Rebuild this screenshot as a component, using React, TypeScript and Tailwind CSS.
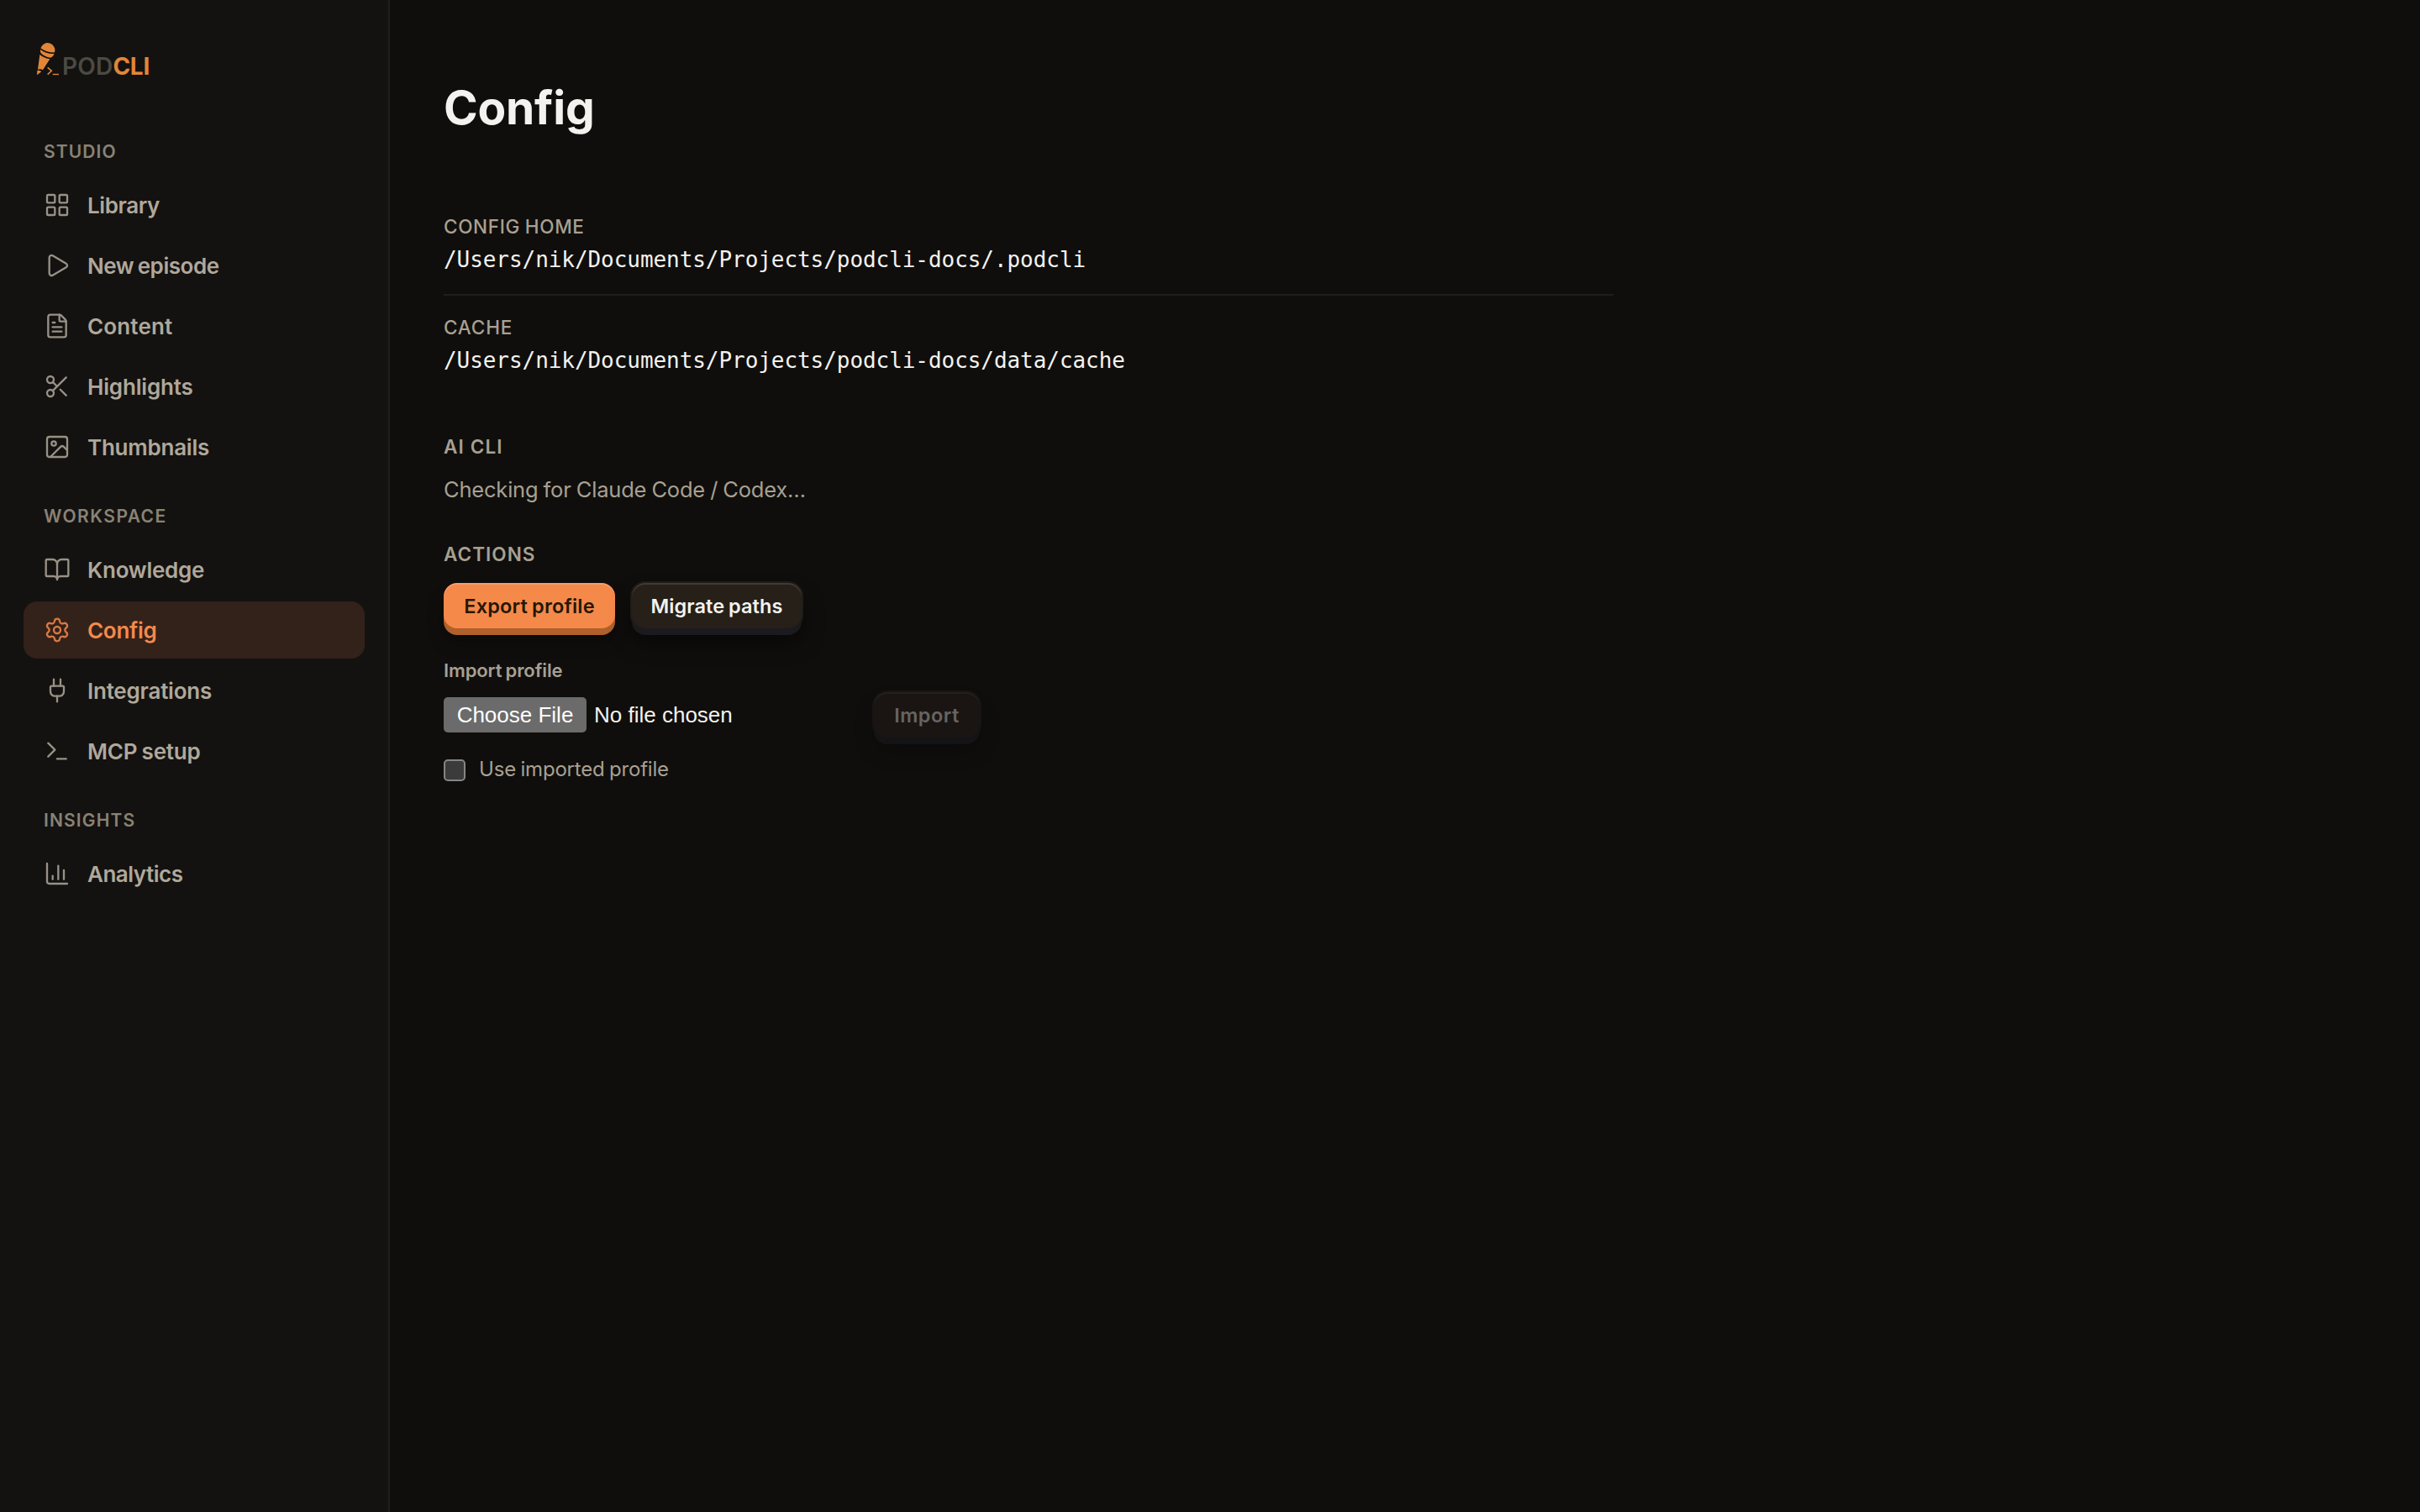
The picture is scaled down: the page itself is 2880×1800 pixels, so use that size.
import React from "react";
import {
  BookOpen,
  ChartColumn,
  FileText,
  Image as ImageIcon,
  LayoutGrid,
  Play,
  Plug,
  Scissors,
  Settings,
  Terminal,
  type LucideIcon,
} from "lucide-react";

type NavItem = { label: string; icon: LucideIcon; text: string; active?: boolean };
type NavGroup = { title: string; tracking: string; items: NavItem[] };

const groups: NavGroup[] = [
  {
    title: "STUDIO",
    tracking: "tracking-[1.1px]",
    items: [
      { label: "Library", icon: LayoutGrid, text: "tracking-[-0.4px]" },
      { label: "New episode", icon: Play, text: "tracking-[-0.45px] [word-spacing:-1.6px]" },
      { label: "Content", icon: FileText, text: "tracking-[0.15px]" },
      { label: "Highlights", icon: Scissors, text: "tracking-[-0.18px]" },
      { label: "Thumbnails", icon: ImageIcon, text: "tracking-[-0.23px]" },
    ],
  },
  {
    title: "WORKSPACE",
    tracking: "tracking-[1.45px]",
    items: [
      { label: "Knowledge", icon: BookOpen, text: "tracking-[-0.26px]" },
      { label: "Config", icon: Settings, text: "tracking-[-0.29px]", active: true },
      { label: "Integrations", icon: Plug, text: "tracking-[-0.22px]" },
      { label: "MCP setup", icon: Terminal, text: "tracking-[-0.2px] [word-spacing:-1.1px]" },
    ],
  },
  {
    title: "INSIGHTS",
    tracking: "tracking-[1.15px]",
    items: [{ label: "Analytics", icon: ChartColumn, text: "tracking-[-0.5px]" }],
  },
];

const paths = [
  {
    label: "CONFIG HOME",
    value: "/Users/nik/Documents/Projects/podcli-docs/.podcli",
    text: "tracking-[0.65px] [word-spacing:-0.7px]",
    row: "border-b-2 border-[#1f1e1c]",
  },
  {
    label: "CACHE",
    value: "/Users/nik/Documents/Projects/podcli-docs/data/cache",
    text: "tracking-[0.83px]",
    row: "",
  },
];

function Logo() {
  return (
    <div className="flex h-10 items-start">
      <svg viewBox="66 60 90 120" className="h-10 w-[30px] shrink-0" fill="#e28639">
        <path d="M85 82 A25.500 25.500 0 0 1 135 97 Q106 99 85 82 Z" />
        <path d="M84 87 Q106 104 134 102 Q130 112 121 116 Q96 112 85 98 Q83 92 84 87 Z" />
        <path d="M82 105 Q95 117 118 121 L93 160 Q85 155 75 158 Z" />
        <path d="M73 162 Q82 160 88 166 L72 178 Z" />
        <path d="M110 151 L124 163 L110 176" fill="none" stroke="#e28639" strokeWidth="4.500" />
        <rect x="128" y="173.500" width="22" height="4" />
      </svg>
      <div className="ml-[2px] mt-[12px] flex text-[28px] leading-[34px]">
        <span className="font-semibold tracking-[0.2px] text-[#4b4a43]">POD</span>
        <span className="font-bold tracking-[-0.27px] text-[#e28639]">CLI</span>
      </div>
    </div>
  );
}

function Sidebar() {
  return (
    <aside className="flex w-[464px] shrink-0 flex-col border-r-2 border-[#1f1e1c] bg-[#131210] pt-[50px]">
      <div className="pl-[42px]">
        <Logo />
      </div>
      <nav className="mt-[42px] flex flex-col">
        {groups.map((g) => (
          <section key={g.title} className="flex flex-col pl-7 pr-7">
            <h2 className={`mt-[34px] mb-[14px] pl-6 text-[21px] leading-[30px] font-semibold text-[#8a8275] ${g.tracking}`}>
              {g.title}
            </h2>
            <ul className="flex flex-col gap-1">
              {g.items.map(({ label, icon: Icon, text, active }) => (
                <li
                  key={label}
                  className={`flex h-[68px] items-center gap-5 rounded-2xl pl-6 ${
                    active ? "bg-[#33221a] text-[#f5894a]" : "text-[#b0a89b]"
                  }`}
                >
                  <Icon size={32} strokeWidth={1.75} className="opacity-85" />
                  <span className={`mt-[2px] text-[26px] leading-[34px] font-semibold whitespace-nowrap ${text}`}>{label}</span>
                </li>
              ))}
            </ul>
          </section>
        ))}
      </nav>
    </aside>
  );
}

const darkButton =
  "h-[54px] rounded-[16px] text-center text-[23.5px] leading-[56px] font-semibold";

export default function App() {
  return (
    <div className="flex h-[1800px] w-[2880px] overflow-hidden bg-[#0f0e0c] font-['Inter',sans-serif]">
      <Sidebar />
      <main className="flex w-[1456px] flex-col pl-16 pt-[98px]">
        <h1 className="text-[55px] leading-[60px] font-bold tracking-[-0.2px] text-[#f4f2ee]">Config</h1>

        <div className="mt-[74px] flex flex-col">
          {paths.map((p) => (
            <div key={p.label} className={`flex h-[120px] flex-col pt-6 ${p.row}`}>
              <div className={`text-[22.5px] leading-[28px] font-medium text-[#a8a092] ${p.text}`}>{p.label}</div>
              <div className="mt-[7px] font-['DejaVu_Sans_Mono',monospace] text-[26px] leading-9 tracking-[-0.06px] text-[#f4f2ee]">
                {p.value}
              </div>
            </div>
          ))}
        </div>

        <h2 className="mt-[46px] text-[22.5px] leading-[28px] font-semibold tracking-[1.16px] text-[#a8a092]">AI CLI</h2>
        <p className="mt-[19px] text-[25.5px] leading-9 tracking-[-0.2px] text-[#a8a092] [word-spacing:-0.8px]">
          Checking for Claude Code / Codex…
        </p>

        <h2 className="mt-[45px] text-[22.5px] leading-[28px] font-semibold tracking-[1.05px] text-[#a8a092]">ACTIONS</h2>
        <div className="mt-5 flex gap-5">
          <button className="h-[54px] w-[204px] rounded-[16px] bg-[#f5894a] text-center text-[23.5px] leading-[56px] font-semibold tracking-[0.2px] text-[#251703] shadow-[inset_0_2px_0_rgba(255,255,255,0.18),0_8px_0_#b0602a,0_16px_20px_rgba(0,0,0,0.3)] [word-spacing:-1.1px]">
            Export profile
          </button>
          <button
            className={`w-[202px] bg-[#262019] tracking-[0.1px] text-[#f4f2ee] shadow-[inset_0_2px_0_rgba(255,255,255,0.12),0_8px_0_#1b1a1f,0_0_0_2px_#1e1d1a,0_16px_24px_rgba(0,0,0,0.5)] [word-spacing:-1.3px] ${darkButton}`}
          >
            Migrate paths
          </button>
        </div>

        <div className="mt-[36px] text-[22px] leading-[28px] font-semibold tracking-[-0.1px] text-[#a8a092] [word-spacing:-1.2px]">
          Import profile
        </div>
        <div className="mt-[12px] flex items-center">
          <div className="flex w-[512px] items-center font-['Liberation_Sans',sans-serif] text-[26px]">
            <button className="h-[42px] w-[170px] rounded-[5px] bg-[#6b6b6b] text-center leading-[42px] text-white">Choose File</button>
            <span className="ml-[9px] leading-[42px] text-[#f4f2ee]">No file chosen</span>
          </div>
          <button
            className={`w-[126px] bg-[#1a1512] tracking-[0.5px] text-[#666462] shadow-[inset_0_2px_0_#24211d,0_8px_0_#141417,0_0_0_2px_#161513,0_16px_24px_rgba(0,0,0,0.22)] ${darkButton}`}
            disabled
          >
            Import
          </button>
        </div>

        <label className="mt-[26px] flex h-[26px] items-center">
          <span className="size-[26px] rounded-[5px] border-2 border-[#858585] bg-[#3b3b3b]" />
          <span className="mt-[-3px] ml-[16px] text-[24px] leading-[26px] tracking-[-0.2px] text-[#a8a092] [word-spacing:-1px]">
            Use imported profile
          </span>
        </label>
      </main>
    </div>
  );
}
